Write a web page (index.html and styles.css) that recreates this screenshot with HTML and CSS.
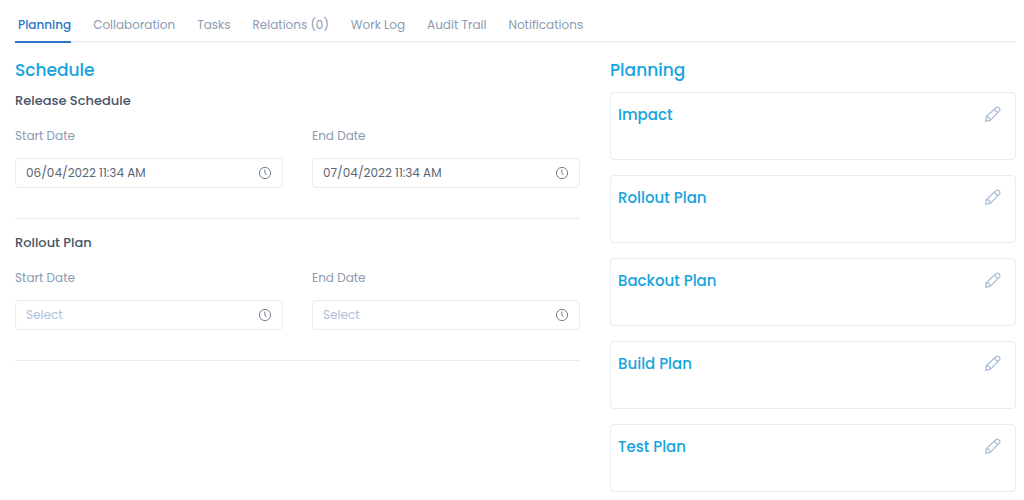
FILE: index.html
```html
<!DOCTYPE html>
<html lang="en">
<head>
    <meta charset="UTF-8">
    <meta name="viewport" content="width=device-width, initial-scale=1.0">
    <title>Planning</title>
    <link rel="stylesheet" href="styles.css">
</head>
<body>
    <svg class="sprite" aria-hidden="true">
        <symbol id="clock" viewBox="0 0 14 14">
            <circle cx="7" cy="7" r="5.6"/>
            <path d="M6.800 3.500v3.500l1.700 2"/>
        </symbol>
        <symbol id="pencil" viewBox="0 0 16 16">
            <path d="M.8 15.200l.6-4.600L10.800 1.700a2.500 2.500 0 0 1 3.500 3.500L5.200 14.500z"/>
            <path d="M1.400 10.600c2-.3 3.800 1.600 3.800 3.900M9.800 2.700c.2 1.900 1.600 3.300 3.500 3.500"/>
        </symbol>
    </svg>

    <nav class="tabs">
        <a class="tab active" href="#planning">Planning</a>
        <a class="tab" href="#collaboration">Collaboration</a>
        <a class="tab" href="#tasks">Tasks</a>
        <a class="tab" href="#relations">Relations (0)</a>
        <a class="tab" href="#worklog">Work Log</a>
        <a class="tab" href="#audit">Audit Trail</a>
        <a class="tab" href="#notifications">Notifications</a>
    </nav>

    <main class="content" id="planning">
        <section>
            <h2>Schedule</h2>

            <div class="group">
                <h3>Release Schedule</h3>
                <div class="fields">
                    <div class="field">
                        <label for="releaseStart">Start Date</label>
                        <div class="date-box">
                            <input type="text" id="releaseStart" placeholder="Select" value="06/04/2022 11:34 AM">
                            <svg class="clock"><use href="#clock"/></svg>
                        </div>
                    </div>
                    <div class="field">
                        <label for="releaseEnd">End Date</label>
                        <div class="date-box">
                            <input type="text" id="releaseEnd" placeholder="Select" value="07/04/2022 11:34 AM">
                            <svg class="clock"><use href="#clock"/></svg>
                        </div>
                    </div>
                </div>
            </div>

            <div class="group">
                <h3>Rollout Plan</h3>
                <div class="fields">
                    <div class="field">
                        <label for="rolloutStart">Start Date</label>
                        <div class="date-box">
                            <input type="text" id="rolloutStart" placeholder="Select">
                            <svg class="clock"><use href="#clock"/></svg>
                        </div>
                    </div>
                    <div class="field">
                        <label for="rolloutEnd">End Date</label>
                        <div class="date-box">
                            <input type="text" id="rolloutEnd" placeholder="Select">
                            <svg class="clock"><use href="#clock"/></svg>
                        </div>
                    </div>
                </div>
            </div>
        </section>

        <section>
            <h2>Planning</h2>
            <div class="cards">
                <div class="card">
                    <h4>Impact</h4>
                    <button class="edit" aria-label="Edit Impact"><svg><use href="#pencil"/></svg></button>
                </div>
                <div class="card">
                    <h4>Rollout Plan</h4>
                    <button class="edit" aria-label="Edit Rollout Plan"><svg><use href="#pencil"/></svg></button>
                </div>
                <div class="card">
                    <h4>Backout Plan</h4>
                    <button class="edit" aria-label="Edit Backout Plan"><svg><use href="#pencil"/></svg></button>
                </div>
                <div class="card">
                    <h4>Build Plan</h4>
                    <button class="edit" aria-label="Edit Build Plan"><svg><use href="#pencil"/></svg></button>
                </div>
                <div class="card">
                    <h4>Test Plan</h4>
                    <button class="edit" aria-label="Edit Test Plan"><svg><use href="#pencil"/></svg></button>
                </div>
            </div>
        </section>
    </main>
</body>
</html>
```
FILE: styles.css
```css
* {
    box-sizing: border-box;
}
body {
    margin: 0;
    padding: 0 8px 8px 15px;
    font-family: Poppins, Inter, sans-serif;
    font-size: 12px;
    line-height: 20px;
    color: #475467;
    background-color: #fff;
}
h2, h3, h4 {
    margin: 0;
    font-weight: 500;
}
svg {
    fill: none;
    stroke: currentColor;
}
.sprite {
    display: none;
}
.tabs {
    display: flex;
    gap: 19px;
    border-bottom: 2px solid #f0f2f8;
}
.tab {
    padding: 15px 0 6px 3px;
    margin-bottom: -2px;
    border-bottom: 2px solid transparent;
    color: #8b9bb2;
    text-decoration: none;
}
.tab.active {
    color: #2f75c6;
    border-color: #2f75c6;
    font-weight: 500;
}
.content {
    display: grid;
    grid-template-columns: minmax(0, 565fr) minmax(0, 406fr);
    gap: 30px;
    padding-top: 15px;
}
h2 {
    margin-bottom: 10px;
    font-size: 17px;
    line-height: 24px;
    color: #16a3de;
}
h3 {
    margin-bottom: 16px;
    font-size: 13px;
    line-height: 18px;
}
.group {
    padding-bottom: 30px;
    margin-bottom: 15px;
    border-bottom: 1px solid #e6ebf4;
}
.fields {
    display: grid;
    grid-template-columns: 1fr 1fr;
    gap: 29px;
}
label {
    display: block;
    margin-bottom: 12px;
    color: #8b9bb2;
}
.date-box {
    display: flex;
    align-items: center;
    height: 30px;
    padding: 0 10px;
    border: 1px solid #e6ebf4;
    border-radius: 4px;
}
.date-box input {
    flex: 1;
    min-width: 0;
    padding: 0;
    border: none;
    outline: none;
    font: inherit;
    color: #5a6675;
    background: none;
}
.date-box input::placeholder {
    color: #adc1da;
    opacity: 1;
}
.clock {
    width: 14px;
    height: 14px;
    color: #75818f;
}
.cards {
    display: grid;
    gap: 15px;
}
.card {
    display: flex;
    justify-content: space-between;
    align-items: flex-start;
    min-height: 68px;
    padding: 11px 14px 11px 7px;
    border: 1px solid #e6ebf4;
    border-radius: 4px;
}
h4 {
    font-size: 15px;
    line-height: 22px;
    color: #16a3de;
}
.edit {
    display: flex;
    padding: 2px 0;
    border: none;
    background: none;
    color: #adbfd6;
    cursor: pointer;
}
.edit svg {
    width: 16px;
    height: 16px;
    stroke-width: 1.3;
}
```
